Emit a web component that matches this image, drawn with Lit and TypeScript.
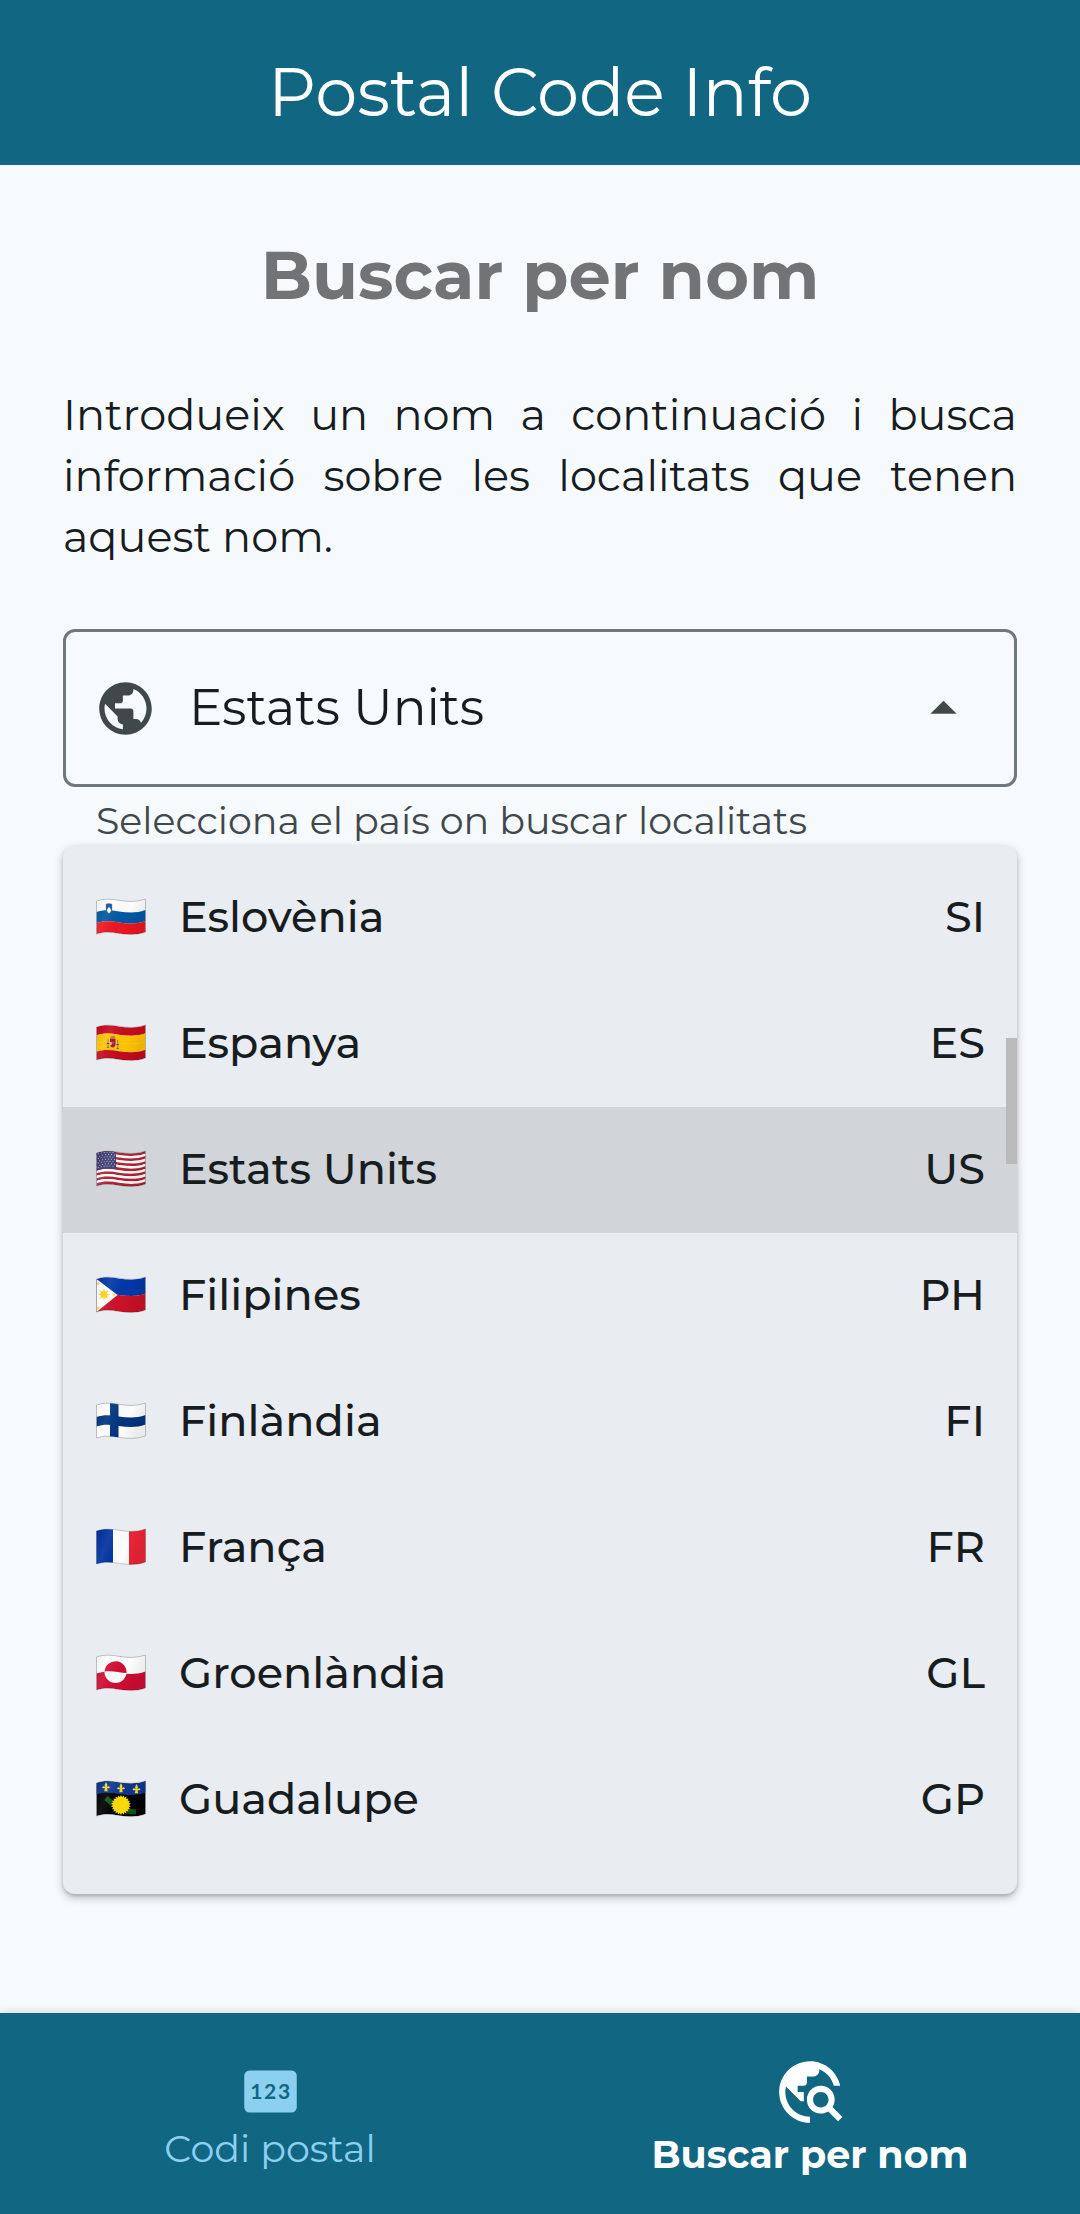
import { LitElement, html, css, svg } from "lit";
import type { SVGTemplateResult } from "lit";
import { customElement, state } from "lit/decorators.js";
import { classMap } from "lit/directives/class-map.js";

interface Country {
  code: string;
  name: string;
}

const COUNTRIES: Country[] = [
  { code: "SI", name: "Eslovènia" },
  { code: "ES", name: "Espanya" },
  { code: "US", name: "Estats Units" },
  { code: "PH", name: "Filipines" },
  { code: "FI", name: "Finlàndia" },
  { code: "FR", name: "França" },
  { code: "GL", name: "Groenlàndia" },
  { code: "GP", name: "Guadalupe" },
];

/* Flags are drawn on a 50 x 37 canvas; every horizontal edge follows one wave. */
const TOP = 3;
const BOTTOM = 36;

const band = (from: number, to: number): string =>
  `M0.5 ${from}C16 ${from - 6} 30 ${from + 5} 49.5 ${from - 2}` +
  `V${to - 2}C30 ${to + 5} 16 ${to - 6} 0.5 ${to}Z`;

const stripes = (colors: string[]): SVGTemplateResult[] => {
  const step = (BOTTOM - TOP) / colors.length;
  return colors.map(
    (color, i) =>
      svg`<path fill=${color} d=${band(TOP + i * step, TOP + (i + 1) * step)}></path>`
  );
};

const sunPoints = (cx: number, cy: number, outer: number, inner: number, rays: number): string =>
  Array.from({ length: rays * 2 }, (_, i) => {
    const r = i % 2 ? inner : outer;
    const a = (Math.PI * i) / rays;
    return `${(cx + r * Math.sin(a)).toFixed(2)},${(cy - r * Math.cos(a)).toFixed(2)}`;
  }).join(" ");

const starRows = [0, 1, 2, 3, 4, 5, 6];

const FLAG_ART: Record<string, () => SVGTemplateResult | SVGTemplateResult[]> = {
  SI: () => svg`
    ${stripes(["#fff", "#0059a6", "#ee1620"])}
    <path fill="#0059a6" stroke="#c05a70" stroke-width="0.4" d="M10 6q3-1 6 0v5.500q-.6 3.500-3 4.500q-2.400-1-3-4.500z"></path>
    <path fill="#fff" d="M10.800 12l1-1.500 1.200-1.800 1.200 1.800 1 1.500q-.6 2.600-2.200 3.200-1.600-.6-2.200-3.200z"></path>`,
  ES: () => svg`
    ${stripes(["#c60b1e", "#ffc400", "#ffc400", "#c60b1e"])}
    <path fill="#ad1519" d="M14 14.500h5.500v6q-.4 2.600-2.700 3-2.400-.4-2.800-3z"></path>
    <path fill="#c8743a" d="M14.500 12.500q2.300-1.600 4.600 0l-.4 2h-3.800z"></path>
    <path fill="#6a5a90" d="M15.800 17.500h2v2.500h-2z"></path>
    <path fill="#e8b9a0" d="M14 18h1.800v3H14z"></path>
    <path fill="none" stroke="#a08a6a" stroke-width="1.200" d="M12 15v8M21.700 16v8"></path>
    <path fill="none" stroke="#ad1519" stroke-width="1" d="M10.800 19.500h2.400M20.500 20.500h2.400"></path>
    <path fill="none" stroke="#5a6a7a" stroke-width="1" d="M10.800 23.500h2.400M20.500 24.500h2.400"></path>`,
  US: () => svg`
    ${stripes(Array.from({ length: 13 }, (_, i) => (i % 2 ? "#fff" : "#b22234")))}
    <path fill="#3c3b6e" d="M.5 3C7 .6 13 .3 20 1.500V19.200C13 18 7 18.400.5 20.800Z"></path>
    ${starRows.map(
      (r) => svg`<path fill="none" stroke="#dcdcf0" stroke-width="0.900" stroke-dasharray="0.900 2.100"
        d=${`M${r % 2 ? 3.300 : 1.800} ${4 + r * 2.300}C8 ${2 + r * 2.300} 13 ${1.800 + r * 2.300} 19 ${2.800 + r * 2.300}`}></path>`
    )}`,
  PH: () => svg`
    ${stripes(["#0038a8", "#ce1126"])}
    <path fill="#fff" d="M.5 3L21.500 19 .5 36Z"></path>
    <polygon fill="#fcd116" points=${sunPoints(8, 18.500, 6.200, 2.800, 8)}></polygon>
    <circle fill="#fcd116" cx="8" cy="18.500" r="3.300"></circle>
    <polygon fill="#fcd116" points=${sunPoints(2, 7.500, 1.700, 0.800, 5)}></polygon>
    <polygon fill="#fcd116" points=${sunPoints(18, 18.500, 1.700, 0.800, 5)}></polygon>
    <polygon fill="#fcd116" points=${sunPoints(2, 32, 1.700, 0.800, 5)}></polygon>`,
  FI: () => svg`
    <path fill="#fff" d=${band(TOP, BOTTOM)}></path>
    <path fill="#003580" d=${band(15, 24.500)}></path>
    <path fill="#003580" d="M14 1h8.500v34.500H14z"></path>`,
  FR: () => svg`
    <path fill="#0032a0" d="M0 0h17v37H0z"></path>
    <path fill="#fff" d="M17 0h16v37H17z"></path>
    <path fill="#ee2436" d="M33 0h17v37H33z"></path>`,
  GL: () => svg`
    ${stripes(["#fff", "#d00c33"])}
    <circle fill="#fff" cx="19.500" cy="18" r="11"></circle>
    <path fill="#d00c33" d="M8.500 17.500a11 11 0 0 1 22 1.500C24 19 17 16.500 8.500 17.500Z"></path>`,
  GP: () => svg`
    <path fill="#000" d=${band(TOP, BOTTOM)}></path>
    <path fill="#0d3692" d=${band(TOP, 14.500)}></path>
    <path fill="none" stroke="#0b5a1c" stroke-width="5" d="M10 18l8 7M31 31l9 1"></path>
    <polygon fill="#fcdd09" points=${sunPoints(25, 25, 10, 8, 22)}></polygon>
    ${[
      [10, 7],
      [25, 8],
      [40.500, 9],
    ].map(
      ([x, y]) => svg`<path fill="#f7dd30" d=${`M${x} ${y - 5}q2 2.500 .8 5q2-1.500 3 0q.2 1.600-1.600 1.200h-1.200l.8 3h-3.600l.8-3h-1.200q-1.800.4-1.600-1.200q1-1.500 3 0q-1.200-2.500.8-5z`}></path>`
    )}`,
};

@customElement("country-flag")
export class CountryFlag extends LitElement {
  static properties = { code: { type: String } };
  declare code: string;

  static styles = css`
    :host {
      display: block;
      flex: none;
    }
    .flag {
      display: block;
      width: 50px;
      height: 37px;
    }
  `;

  render() {
    const art = FLAG_ART[this.code];
    return html`<svg class="flag" viewBox="0 0 50 37" aria-hidden="true">
      <defs>
        <clipPath id="cloth"><path d=${band(TOP, BOTTOM)}></path></clipPath>
        <linearGradient id="fold" x1="0" y1="0" x2="1" y2="0.300">
          <stop offset="0" stop-color="#000" stop-opacity="0.040"></stop>
          <stop offset="0.300" stop-color="#fff" stop-opacity="0.080"></stop>
          <stop offset="0.700" stop-color="#000" stop-opacity="0.010"></stop>
          <stop offset="1" stop-color="#000" stop-opacity="0.080"></stop>
        </linearGradient>
      </defs>
      <g clip-path="url(#cloth)">${art ? art() : null}</g>
      <path d=${band(TOP, BOTTOM)} fill="url(#fold)" stroke="#000" stroke-opacity="0.200"></path>
    </svg>`;
  }
}

@customElement("app-root")
export class AppRoot extends LitElement {
  @state() private selected = "US";
  @state() private open = true;

  static styles = css`
    :host {
      --brand: #116682;
      --surface: #f6fafd;
      --ink: #171c1f;
      --ink-soft: #40484c;
      display: flex;
      flex-direction: column;
      min-height: 100vh;
      background: var(--surface);
      color: var(--ink);
      font-family: Montserrat, Inter, "Liberation Sans", sans-serif;
      font-weight: 400;
    }
    .bar {
      padding: 52px 24px 33px;
      background: var(--brand);
      color: #fff;
      text-align: center;
      font-size: 67px;
      line-height: 80px;
    }
    .content {
      padding: 70px 63px 48px;
    }
    .title {
      margin: 0;
      color: #717375;
      text-align: center;
      font-size: 67px;
      line-height: 80px;
      font-weight: 700;
    }
    .intro {
      margin: 69px 0 62px;
      font-size: 43px;
      line-height: 61px;
      text-align: justify;
    }
    .field {
      display: flex;
      align-items: center;
      box-sizing: border-box;
      height: 158px;
      padding: 0 39px 0 28px;
      border: 3px solid #6f797d;
      border-radius: 12px;
    }
    .icon {
      display: block;
      flex: none;
      width: 63px;
      height: 63px;
      fill: currentColor;
    }
    .field .icon {
      color: var(--ink-soft);
    }
    .value {
      flex: 1;
      min-width: 0;
      margin: 0 24px 0 32px;
      padding: 0;
      border: 0;
      outline: 0;
      background: none;
      color: inherit;
      font: inherit;
      font-size: 50px;
      line-height: 64px;
    }
    .toggle {
      padding: 0;
      border: 0;
      background: none;
      cursor: pointer;
    }
    .toggle.closed {
      transform: rotate(180deg);
    }
    .hint {
      display: block;
      margin: 12px 33px 2px;
      color: var(--ink-soft);
      font-size: 38px;
      line-height: 44px;
    }
    .menu {
      position: relative;
      padding: 10px 0 31px;
      border-radius: 12px;
      background: #e9edf2;
      box-shadow: 0 4px 8px rgba(0, 0, 0, 0.24), 0 2px 3px rgba(0, 0, 0, 0.12);
    }
    .option {
      display: flex;
      align-items: center;
      gap: 33px;
      width: 100%;
      height: 126px;
      padding: 0 32px 3px 33px;
      border: 0;
      background: none;
      color: inherit;
      font: inherit;
      font-size: 43px;
      font-weight: 500;
      text-align: left;
      cursor: pointer;
    }
    .option.selected {
      background: #d1d4d8;
    }
    .name {
      flex: 1;
    }
    .thumb {
      position: absolute;
      top: 193px;
      right: 0;
      width: 11px;
      height: 126px;
      background: #bababa;
    }
    .nav {
      display: flex;
      box-sizing: border-box;
      height: 201px;
      margin-top: auto;
      padding-top: 4px;
      background: var(--brand);
      box-shadow: 0 -2px 8px rgba(0, 0, 0, 0.1);
    }
    .tab {
      display: flex;
      flex: 1;
      flex-direction: column;
      align-items: center;
      justify-content: center;
      gap: 4px;
      color: #8cd0f0;
      font-size: 38px;
      line-height: 44px;
      text-decoration: none;
    }
    .tab.active {
      color: #fff;
      font-weight: 700;
    }
    .tab.active .icon {
      width: 74px;
      height: 74px;
    }
    .digits {
      fill: var(--brand);
      font-family: Lato, sans-serif;
      font-size: 8px;
      font-weight: 700;
      text-anchor: middle;
    }
  `;

  private choose(code: string) {
    this.selected = code;
  }

  private toggle() {
    this.open = !this.open;
  }

  render() {
    const current = COUNTRIES.find((c) => c.code === this.selected);
    return html`
      <header class="bar">Postal Code Info</header>
      <main class="content">
        <h1 class="title">Buscar per nom</h1>
        <p class="intro">
          Introdueix un nom a continuació i busca informació sobre les localitats que tenen aquest nom.
        </p>
        <div class="field">
          <svg class="icon" viewBox="0 0 24 24" aria-hidden="true">
            <path d="M12 2C6.480 2 2 6.480 2 12s4.480 10 10 10 10-4.480 10-10S17.520 2 12 2zm-1 17.930c-3.950-.490-7-3.850-7-7.930 0-.620.080-1.210.210-1.790L9 15v1c0 1.100.900 2 2 2v1.930zm6.900-2.540c-.260-.810-1-1.390-1.900-1.390h-1v-3c0-.550-.450-1-1-1H8v-2h2c.550 0 1-.450 1-1V7h2c1.100 0 2-.900 2-2v-.410c2.930 1.190 5 4.060 5 7.410 0 2.080-.800 3.970-2.100 5.390z"></path>
          </svg>
          <input
            class="value"
            id="country"
            type="text"
            role="combobox"
            aria-controls="countries"
            aria-expanded=${this.open ? "true" : "false"}
            readonly
            .value=${current ? current.name : ""}
          />
          <button
            class=${classMap({ toggle: true, closed: !this.open })}
            type="button"
            aria-labelledby="hint"
            @click=${this.toggle}
          >
            <svg class="icon" viewBox="0 0 24 24" aria-hidden="true"><path d="M7 14l5-5 5 5z"></path></svg>
          </button>
        </div>
        <label class="hint" id="hint" for="country">Selecciona el país on buscar localitats</label>
        ${this.open
          ? html`<div class="menu">
              <div id="countries" role="listbox" aria-labelledby="hint">
                ${COUNTRIES.map(
                  (c) => html`<button
                    class=${classMap({ option: true, selected: c.code === this.selected })}
                    type="button"
                    role="option"
                    aria-selected=${c.code === this.selected ? "true" : "false"}
                    @click=${() => this.choose(c.code)}
                  >
                    <country-flag code=${c.code}></country-flag>
                    <span class="name">${c.name}</span>
                    <span>${c.code}</span>
                  </button>`
                )}
              </div>
              <div class="thumb"></div>
            </div>`
          : null}
      </main>
      <nav class="nav">
        <a class="tab" href="#codi-postal">
          <svg class="icon" viewBox="0 0 24 24" aria-hidden="true">
            <rect x="2" y="4" width="20" height="16" rx="2"></rect>
            <text class="digits" x="6.600 11.800 17.200" y="15">123</text>
          </svg>
          <span>Codi postal</span>
        </a>
        <a class="tab active" href="#buscar-per-nom" aria-current="page">
          <svg class="icon" viewBox="0 0 24 24" aria-hidden="true">
            <path d="M19.300 16.900c.4-.7.7-1.500.7-2.400 0-2.500-2-4.500-4.500-4.500S11 12 11 14.500s2 4.500 4.500 4.500c.9 0 1.700-.3 2.400-.7l3.200 3.200 1.400-1.400-3.200-3.200zm-3.800.1c-1.400 0-2.500-1.100-2.500-2.500s1.100-2.500 2.500-2.500 2.500 1.100 2.500 2.500-1.100 2.500-2.500 2.500zM12 20v2C6.480 22 2 17.520 2 12S6.480 2 12 2c4.840 0 8.870 3.440 9.800 8h-2.070c-.640-2.460-2.400-4.470-4.730-5.410V5c0 1.100-.9 2-2 2h-2v2c0 .550-.450 1-1 1H8v2h2v3H9l-4.790-4.790C4.080 10.790 4 11.380 4 12c0 4.410 3.590 8 8 8z"></path>
          </svg>
          <span>Buscar per nom</span>
        </a>
      </nav>
    `;
  }
}
